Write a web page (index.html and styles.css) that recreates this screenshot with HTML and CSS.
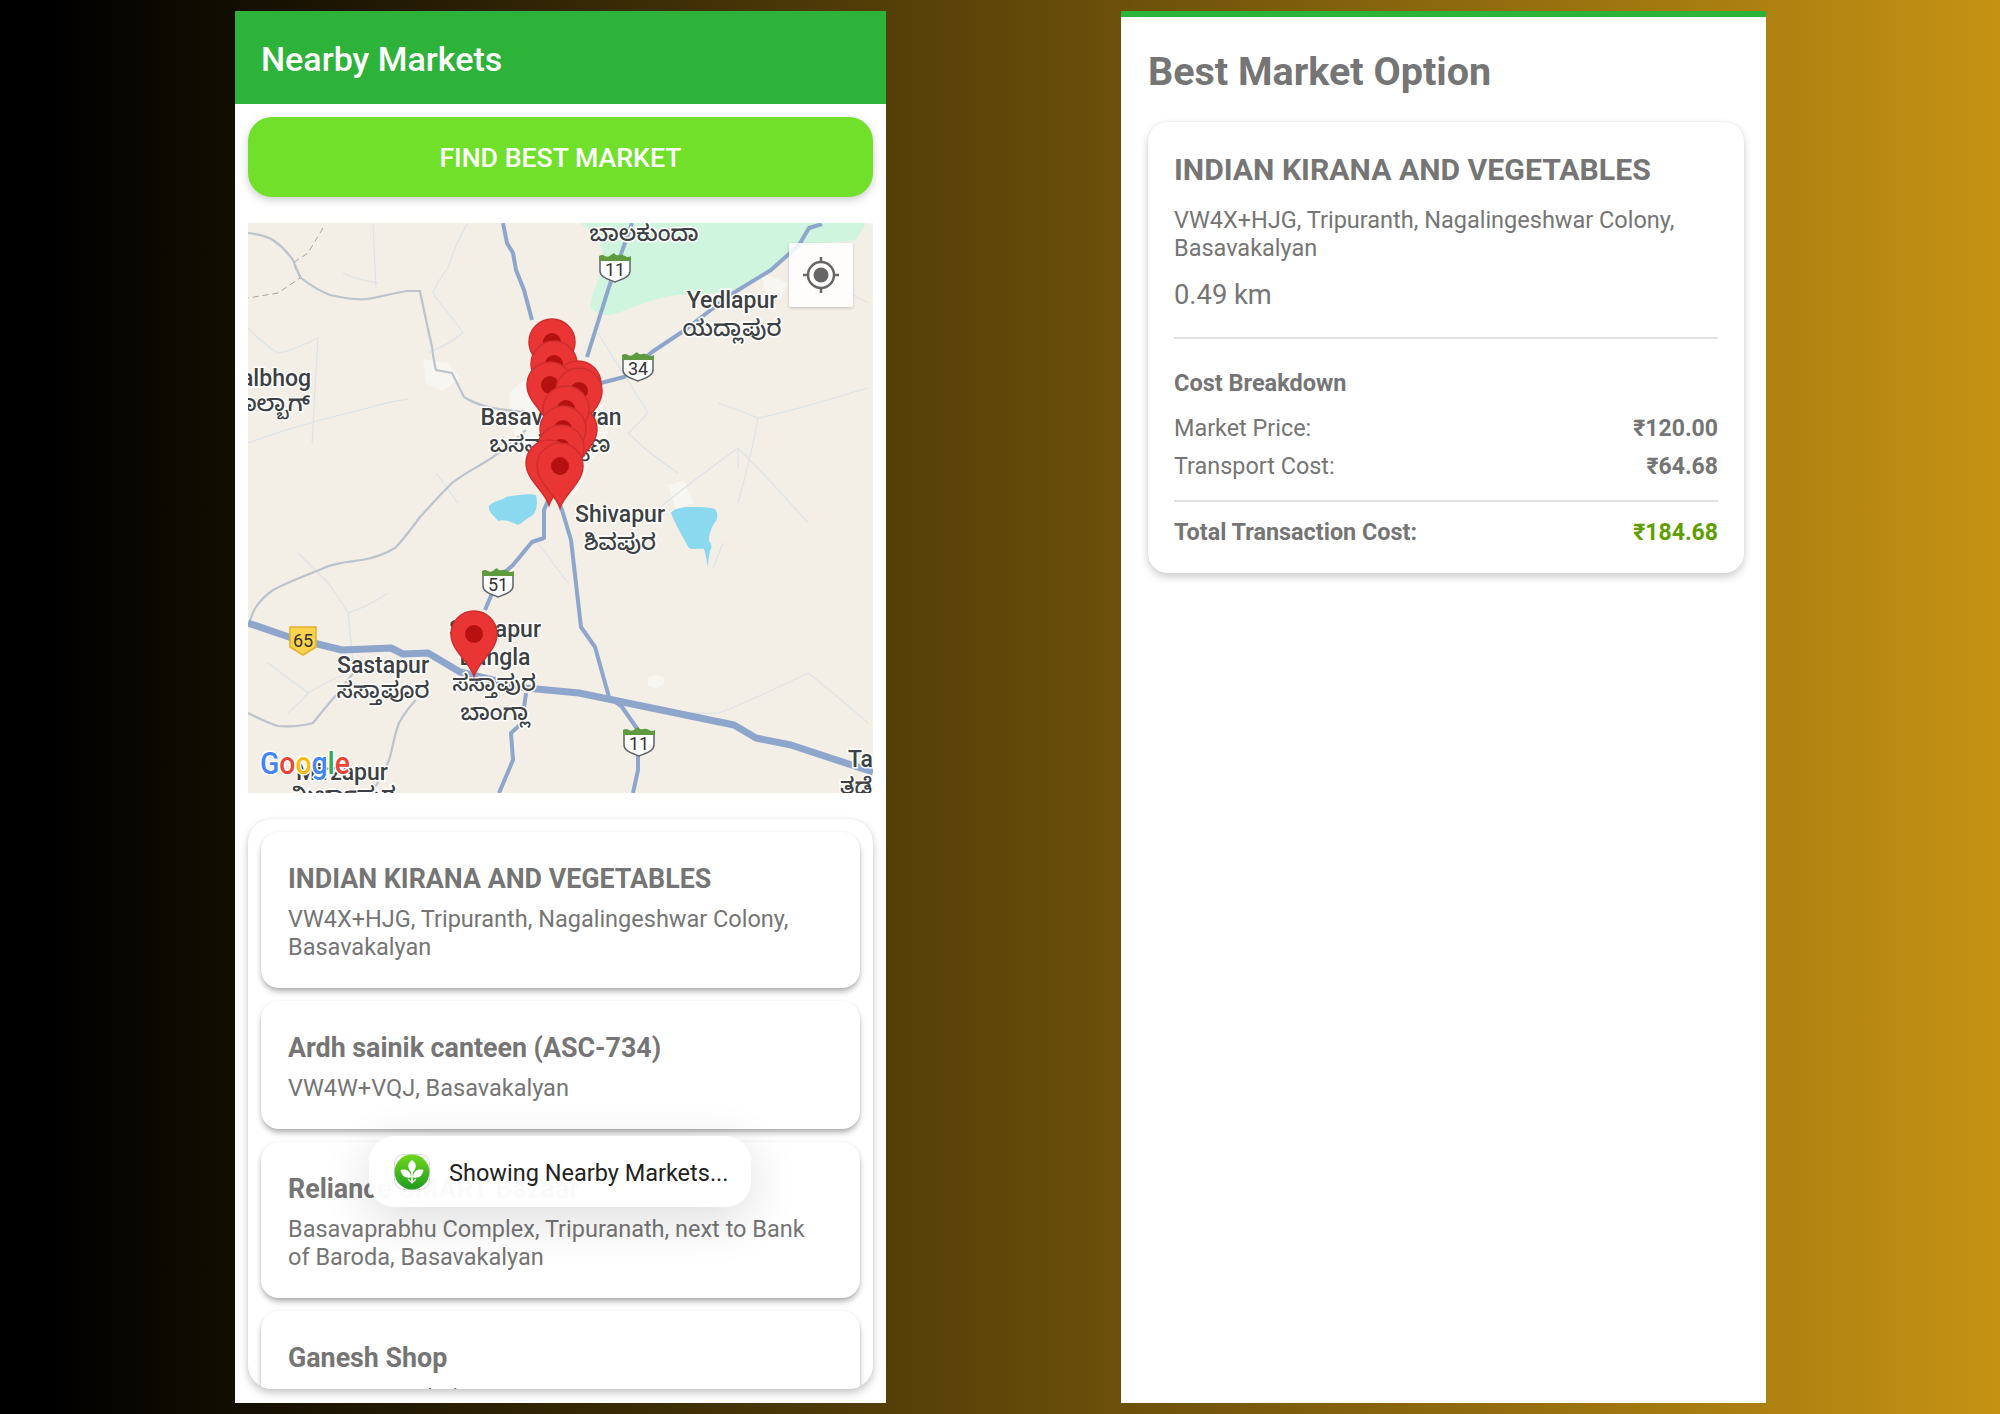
FILE: index.html
```html
<!DOCTYPE html>
<html lang="en">
<head>
  <meta charset="utf-8">
  <title>Nearby Markets</title>
  <link rel="stylesheet" href="styles.css">
</head>
<body>
  <section class="phone phone-nearby">
    <header class="app-bar">Nearby Markets</header>

    <button class="find-btn" type="button">FIND BEST MARKET</button>

    <div class="map">
      <svg class="map-svg" viewBox="0 0 625 570" width="625" height="570">
        <defs>
          <g id="pin">
            <path d="M0 42C-4 28-23 17-23 0A23 23 0 1 1 23 0C23 17 4 28 0 42Z" fill="#ea3535" stroke="#cf2e2e" stroke-width="1.5"/>
            <circle r="9" fill="#b71010"/>
          </g>
          <g id="shield">
            <path d="M-15-9H15V3C15 9 7 11 0 14C-7 11-15 9-15 3Z" fill="#fff" stroke="#5f6368" stroke-width="1.5" stroke-linejoin="round"/>
            <path d="M-16-7V-12Q-13-14-10-12T-4-13T0-14T4-13T10-12T16-12V-7Z" fill="#5f9a3f"/>
          </g>
        </defs>

        <!-- land cover -->
        <path class="park" d="M333 0C345 12 356 22 355 35C354 55 342 70 343 85C350 92 358 94 370 90C390 82 410 74 430 72C450 70 470 71 482 68C500 60 512 53 523 47C535 38 548 26 560 22C575 18 595 20 608 17L618 0Z"/>
        <path class="town" d="M262 170C275 155 290 150 300 150C325 158 345 170 355 185C365 200 360 220 345 235C335 250 335 265 325 272C305 270 290 262 280 248C270 225 258 195 262 170Z"/>
        <path class="town" d="M175 136L200 140L212 155L194 168L178 160Z"/>
        <path class="town" d="M514 50L540 60L532 76L516 68Z"/>
        <path class="town" d="M420 262L436 258L446 280L428 286Z"/>
        <path class="town" d="M400 455C408 450 415 452 417 458C414 466 404 466 400 462Z"/>
        <path class="water" d="M241 283C246 277 254 278 258 274C268 272 282 270 288 272C290 280 289 287 285 292C278 296 274 300 270 302C262 298 256 296 250 298C246 292 240 290 241 283Z"/>
        <path class="water" d="M423 290C425 286 432 285 438 284C448 284 460 284 467 286C470 290 470 294 468 298C463 304 461 312 461 318C464 321 464 325 462 328C461 333 460 339 460 344C458 338 458 331 456 326C450 325 445 327 441 325C436 316 428 303 423 290Z"/>

        <!-- minor roads -->
        <g class="road-thin">
          <path d="M220 0C210 15 205 30 200 45C192 55 188 62 185 70C195 85 205 95 215 110C205 118 192 125 180 130"/>
          <path d="M125 0L128 65M95 50C105 56 118 58 130 60"/>
          <path d="M0 105C10 115 20 125 30 130C45 128 58 120 70 115C68 150 66 185 64 220M0 220C40 205 80 195 120 185C135 180 148 178 160 176"/>
          <path d="M350 110C365 135 385 165 400 190C392 198 386 205 380 210C395 225 412 238 430 250M470 180C485 185 498 190 510 195C545 188 585 175 620 165M510 195C505 225 497 255 490 280"/>
          <path d="M405 290C432 268 462 245 490 225C515 250 538 275 560 300M490 225V245"/>
          <path d="M50 330C60 340 70 350 80 360C88 370 94 380 100 390C115 385 128 378 140 370M100 390C102 405 103 422 105 440"/>
          <path d="M20 440C33 450 47 460 60 470C54 478 46 484 40 490M60 470C76 460 94 452 110 445"/>
          <path d="M440 490C450 490 460 491 470 490C500 480 530 464 560 450C580 465 600 483 620 500"/>
          <path d="M188 250L210 280M320 360L290 320M465 345L475 320"/>
          <path d="M555 40C575 55 598 68 620 80"/>
        </g>
        <path class="boundary" d="M75 5L60 30L45 40L52 55L30 70L0 75"/>

        <!-- gray roads -->
        <g class="road-gray">
          <path d="M0 10C10 11 18 13 25 17C35 24 40 30 45 37C48 44 50 50 53 55C62 62 72 68 82 72C95 75 108 77 119 76C132 74 146 70 159 68H172C176 88 180 106 184 124C185 132 186 140 188 147L204 150C208 158 212 166 216 174C225 180 235 183 245 185C256 187 267 188 278 189"/>
          <path d="M278 207C268 216 256 226 245 234C230 244 217 250 204 260C192 272 182 283 172 294C164 305 156 316 147 325C137 331 126 335 114 337C101 339 90 339 78 344C60 352 42 358 25 367C18 372 12 378 8 384C4 390 2 397 0 404"/>
          <path d="M168 477C161 484 156 491 151 500C146 512 145 525 141 537C136 549 130 560 123 570"/>
          <path d="M0 490C10 495 20 500 30 503C42 504 54 503 65 500C73 490 81 480 90 470C96 462 103 452 110 445"/>
        </g>

        <!-- highways -->
        <g class="road">
          <path d="M255 0L259 20L265 30L268 47L276 67L284 97"/>
          <path d="M384 0L378 17L372 34L361 64L339 134"/>
          <path d="M574 1L561 5L551 22L523 47L482 72L437 107L404 129L376 154L353 160"/>
          <path d="M304 262L314 287L323 317L333 404L347 424L361 474L374 484L390 507L390 547L385 570"/>
          <path d="M304 268L296 287L296 315L284 319L265 342L251 354L237 387"/>
          <path d="M278 470L274 500L263 510L265 537L251 570"/>
        </g>
        <path class="road-wide" d="M0 400L41 414L94 427L143 425L155 431L180 430L212 449L278 465L331 470L486 502L508 515L543 522L625 549"/>

        <!-- place labels -->
        <g class="label">
          <text class="kn" x="396" y="18">ಬಾಲಕುಂದಾ</text>
          <text x="484" y="85">Yedlapur</text>
          <text class="kn" x="484" y="113">ಯದ್ಲಾಪುರ</text>
          <text class="label-end" x="63" y="163">Malbhog</text>
          <text class="kn label-end" x="62" y="188">ಮಾಲ್ಬಾಗ್</text>
          <text x="303" y="202">Basavakalyan</text>
          <text class="kn" x="302" y="229">ಬಸವಕಲ್ಯಾಣ</text>
          <text x="372" y="299">Shivapur</text>
          <text class="kn" x="372" y="327">ಶಿವಪುರ</text>
          <text x="247" y="414">Sastapur</text>
          <text x="247" y="442">Bangla</text>
          <text class="kn" x="246" y="468">ಸಸ್ತಾಪುರ</text>
          <text class="kn" x="247" y="497">ಬಾಂಗ್ಲಾ</text>
          <text x="135" y="450">Sastapur</text>
          <text class="kn" x="135" y="475">ಸಸ್ತಾಪೂರ</text>
          <text x="94" y="557">Mirzapur</text>
          <text class="kn" x="94" y="580">ಮಿರ್ಜಾಪುರ</text>
          <text class="label-start" x="600" y="544">Tadola</text>
          <text class="kn label-start" x="592" y="571">ತಡೆಲಾ</text>
        </g>

        <!-- road shields -->
        <use href="#shield" x="367" y="45"/>
        <text class="shield-num" x="367" y="53">11</text>
        <use href="#shield" x="390" y="144"/>
        <text class="shield-num" x="390" y="152">34</text>
        <use href="#shield" x="250" y="360"/>
        <text class="shield-num" x="250" y="368">51</text>
        <path d="M-13-14H13V6L0 14L-13 6Z" transform="translate(55 418)" fill="#fcd34d" stroke="#e0b02e" stroke-width="1.5" stroke-linejoin="round"/>
        <text class="shield-num" x="55" y="424">65</text>
        <use href="#shield" x="391" y="519"/>
        <text class="shield-num" x="391" y="527">11</text>

        <!-- markers, back to front -->
        <use href="#pin" x="304" y="119"/>
        <use href="#pin" x="306" y="141"/>
        <use href="#pin" x="330" y="161"/>
        <use href="#pin" x="302" y="162"/>
        <use href="#pin" x="331" y="168"/>
        <use href="#pin" x="326" y="206"/>
        <use href="#pin" x="318" y="186"/>
        <use href="#pin" x="315" y="206"/>
        <use href="#pin" x="313" y="225"/>
        <use href="#pin" x="301" y="240"/>
        <use href="#pin" x="312" y="243"/>
        <use href="#pin" x="226" y="411"/>

        <text class="google" x="12" y="551" textLength="90" lengthAdjust="spacingAndGlyphs"><tspan fill="#4285f4">G</tspan><tspan fill="#ea4335">o</tspan><tspan fill="#fbbc05">o</tspan><tspan fill="#4285f4">g</tspan><tspan fill="#34a853">l</tspan><tspan fill="#ea4335">e</tspan></text>
      </svg>

      <div class="locate-btn">
        <svg viewBox="0 0 40 40" width="40" height="40">
          <circle cx="20" cy="20" r="13" fill="none" stroke="#666" stroke-width="2.5"/>
          <circle cx="20" cy="20" r="7.5" fill="#666"/>
          <path d="M20 2V8M20 32V38M2 20H8M32 20H38" stroke="#666" stroke-width="2.5"/>
        </svg>
      </div>
    </div>

    <div class="market-list">
      <article class="market-card">
        <h3>INDIAN KIRANA AND VEGETABLES</h3>
        <p>VW4X+HJG, Tripuranth, Nagalingeshwar Colony, Basavakalyan</p>
      </article>
      <article class="market-card">
        <h3>Ardh sainik canteen (ASC-734)</h3>
        <p>VW4W+VQJ, Basavakalyan</p>
      </article>
      <article class="market-card">
        <h3>Reliance SMART Bazaar</h3>
        <p>Basavaprabhu Complex, Tripuranath, next to Bank of Baroda, Basavakalyan</p>
      </article>
      <article class="market-card">
        <h3>Ganesh Shop</h3>
        <p>3754, Basavakalyan</p>
      </article>
    </div>

    <div class="toast">
      <svg class="toast-icon" viewBox="0 0 36 36" width="36" height="36">
        <defs>
          <linearGradient id="appGreen" x1="0" y1="0" x2="0" y2="1">
            <stop offset="0" stop-color="#6fd81c"/>
            <stop offset="1" stop-color="#1f9a22"/>
          </linearGradient>
        </defs>
        <rect x=".5" y=".5" width="35" height="35" rx="9" fill="#fff" stroke="#ddd"/>
        <circle cx="18" cy="18" r="17.500" fill="url(#appGreen)"/>
        <path d="M18 6C22.500 9 23.500 14 18 19C12.500 14 13.500 9 18 6Z" fill="#fff"/>
        <path d="M6.500 16C12 14.500 17 17 17 23.500C11.500 24.500 7.500 22 6.500 16Z" fill="#fff"/>
        <path d="M29.500 16C24 14.500 19 17 19 23.500C24.500 24.500 28.500 22 29.500 16Z" fill="#fff"/>
        <path d="M18 18V29" fill="none" stroke="#fff" stroke-width="1.6"/>
        <path d="M14 25L18 29L22 25" fill="none" stroke="#fff" stroke-width="1.2"/>
      </svg>
      <span>Showing Nearby Markets...</span>
    </div>
  </section>

  <section class="phone phone-best">
    <h1>Best Market Option</h1>

    <div class="best-card">
      <h2>INDIAN KIRANA AND VEGETABLES</h2>
      <p class="best-address">VW4X+HJG, Tripuranth, Nagalingeshwar Colony, Basavakalyan</p>
      <p class="best-distance">0.49 km</p>

      <hr class="rule rule-top">

      <h4>Cost Breakdown</h4>
      <div class="cost-row cost-market"><span>Market Price:</span><b>₹120.00</b></div>
      <div class="cost-row cost-transport"><span>Transport Cost:</span><b>₹64.68</b></div>

      <hr class="rule rule-total">

      <div class="cost-row cost-total"><span>Total Transaction Cost:</span><b>₹184.68</b></div>
    </div>
  </section>
</body>
</html>
```

FILE: styles.css
```css
*, :after, :before {
  box-sizing: border-box;
}

html, body {
  height: 100%;
  margin: 0;
}

body {
  display: flex;
  gap: 235px;
  padding: 11px 0 0 235px;
  overflow: hidden;
  background: linear-gradient(90deg, #000 50px, #c59213 100%);
  font-family: Roboto, "Noto Sans", sans-serif;
  color: #757575;
}

.phone {
  position: relative;
  display: flex;
  flex-direction: column;
  height: 1392px;
  background-color: #fff;
}

.phone-nearby {
  width: 651px;
}

.phone-best {
  width: 645px;
  padding: 0 22px 0 27px;
  border-top: 6px solid #2db23a;
}

/* left screen */

.app-bar {
  display: flex;
  align-items: center;
  height: 93px;
  padding: 3px 0 0 26px;
  background-color: #2db23a;
  color: #fff;
  font-size: 34px;
  font-weight: 500;
}

.find-btn {
  flex: none;
  height: 80px;
  margin: 13px 13px 0;
  padding-top: 3px;
  border: 0;
  border-radius: 24px;
  background-color: #70e02b;
  box-shadow: 0 3px 8px rgba(0, 0, 0, .2);
  color: #fff;
  font-family: inherit;
  font-size: 26.700px;
  font-weight: 500;
}

.map {
  position: relative;
  flex: none;
  height: 570px;
  margin: 26px 13px 0;
  overflow: hidden;
  background-color: #f3efe6;
}

.map-svg {
  display: block;
}

.park {
  fill: #cff5de;
}

.town {
  fill: #f7f6f1;
}

.water {
  fill: #8ad9ee;
}

.road-thin {
  fill: none;
  stroke: #dde3e6;
  stroke-width: 1.2;
}

.boundary {
  fill: none;
  stroke: #a5a59c;
  stroke-width: 1;
  stroke-dasharray: 6 4;
}

.road-gray {
  fill: none;
  stroke: #bcc3ca;
  stroke-width: 2.2;
}

.road {
  fill: none;
  stroke: #8fa6cc;
  stroke-width: 4;
  stroke-linejoin: round;
}

.road-wide {
  fill: none;
  stroke: #8fa6cc;
  stroke-width: 7;
  stroke-linejoin: round;
}

.label text {
  fill: #3c4043;
  stroke: #fff;
  stroke-width: 3px;
  paint-order: stroke;
  font-family: Roboto, "Noto Sans Kannada", "Noto Sans", sans-serif;
  font-size: 23px;
  font-weight: 500;
  text-anchor: middle;
}

.label .kn {
  font-size: 22.500px;
}

.label .label-end {
  text-anchor: end;
}

.label .label-start {
  text-anchor: start;
}

.shield-num {
  fill: #333;
  font-size: 18px;
  text-anchor: middle;
}

.google {
  stroke: #fff;
  stroke-width: 3px;
  paint-order: stroke;
  font-family: Roboto, sans-serif;
  font-size: 31px;
  font-weight: 500;
}

.locate-btn {
  position: absolute;
  top: 20px;
  right: 20px;
  display: flex;
  align-items: center;
  justify-content: center;
  width: 64px;
  height: 64px;
  border-radius: 2px;
  background-color: rgba(255, 255, 255, .85);
  box-shadow: 0 1px 3px rgba(0, 0, 0, .2);
}

.market-list {
  flex: none;
  display: flex;
  flex-direction: column;
  gap: 13px;
  height: 570px;
  margin: 26px 13px 0;
  padding: 13px;
  overflow: hidden;
  border-radius: 24px;
  background-color: #fff;
  box-shadow: 0 4px 8px rgba(0, 0, 0, .22), 0 0 3px rgba(0, 0, 0, .06);
}

.market-card {
  flex: none;
  padding: 30px 27px 27px;
  border-radius: 18px;
  background-color: #fff;
  box-shadow: 0 4px 6px -1px rgba(0, 0, 0, .35), 0 0 3px rgba(0, 0, 0, .06);
}

.market-card h3 {
  margin: 0;
  font-size: 26.800px;
  line-height: 34px;
  font-weight: 700;
}

.market-card p {
  max-width: 530px;
  margin: 9px 0 0;
  font-size: 23.500px;
  line-height: 28px;
}

.toast {
  position: absolute;
  top: 1125px;
  left: 134px;
  display: flex;
  align-items: center;
  gap: 19px;
  width: 382px;
  height: 71px;
  padding-left: 25px;
  border-radius: 26px;
  background-color: rgba(255, 255, 255, .96);
  box-shadow: 0 12px 50px rgba(0, 0, 0, .14);
  color: #222;
  font-size: 23.500px;
}

.toast span {
  padding-top: 2px;
}

.toast-icon {
  flex: none;
}

/* right screen */

.phone-best h1 {
  margin: 0;
  padding-top: 30px;
  font-size: 39.500px;
  line-height: 50px;
  font-weight: 700;
}

.best-card {
  margin-top: 25px;
  padding: 30px 26px 25px 26px;
  border-radius: 20px;
  background-color: #fff;
  box-shadow: 0 4px 8px rgba(0, 0, 0, .2), 0 -1px 3px rgba(0, 0, 0, .04);
}

.best-card h2 {
  margin: 0;
  font-size: 30.200px;
  line-height: 36px;
  font-weight: 700;
}

.best-address {
  margin: 18px 0 0;
  font-size: 23.500px;
  line-height: 28px;
}

.best-distance {
  margin: 17px 0 0;
  font-size: 27.300px;
  line-height: 32px;
}

.rule {
  height: 2px;
  margin: 0;
  border: 0;
  background-color: #e2e2e2;
}

.rule-top {
  margin-top: 26px;
}

.rule-total {
  margin-top: 18px;
}

.best-card h4 {
  margin: 29px 0 0;
  font-size: 23.500px;
  line-height: 30px;
  font-weight: 700;
}

.cost-row {
  display: flex;
  align-items: baseline;
  justify-content: space-between;
  font-size: 23.400px;
  line-height: 30px;
}

.cost-row b {
  font-size: 23px;
  font-weight: 700;
}

.cost-market {
  margin-top: 15px;
}

.cost-transport {
  margin-top: 7px;
}

.cost-total {
  margin-top: 15px;
  font-weight: 700;
}

.cost-total b {
  color: #5f9e00;
}
```
